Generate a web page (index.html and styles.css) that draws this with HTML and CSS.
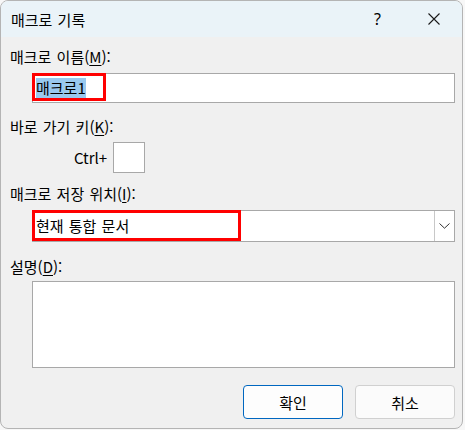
FILE: index.html
```html
<!DOCTYPE html>
<html lang="ko">
<head>
<meta charset="utf-8">
<link rel="stylesheet" href="styles.css">
</head>
<body>
<div class="window">
  <div class="titlebar">
    <span class="title">매크로 기록</span>
    <span class="help">?</span>
    <svg class="close" width="12" height="12" viewBox="0 0 12 12"><path d="M0.5 0.5 L11.5 11.5 M11.5 0.5 L0.5 11.5" stroke="#1a1a1a" stroke-width="1.1" fill="none"/></svg>
  </div>
  <div class="body">
    <div class="label">매크로 이름(<u>M</u>):</div>
    <div class="field name-field">
      <span class="selected">매크로1</span>
      <div class="mark mark-name"></div>
    </div>
    <div class="label l2">바로 가기 키(<u>K</u>):</div>
    <div class="shortcut">
      <span class="ctrl">Ctrl+</span>
      <div class="keybox"></div>
    </div>
    <div class="label l3">매크로 저장 위치(<u>I</u>):</div>
    <div class="field combo">
      <span class="combo-text">현재 통합 문서</span>
      <div class="combo-btn">
        <svg width="11" height="6" viewBox="0 0 11 6"><path d="M0.5 0.5 L5.5 5.2 L10.5 0.5" stroke="#333" stroke-width="1" fill="none"/></svg>
      </div>
      <div class="mark mark-combo"></div>
    </div>
    <div class="label l4">설명(<u>D</u>):</div>
    <div class="field desc"></div>
    <div class="buttons">
      <button class="btn primary">확인</button>
      <button class="btn">취소</button>
    </div>
  </div>
</div>
</body>
</html>
```

FILE: styles.css
```css
* { box-sizing: border-box; }
html, body { margin: 0; padding: 0; }
body {
  background: #f7f7f7;
  font-family: "Noto Sans CJK KR", "Noto Sans", sans-serif;
  font-size: 15px;
  color: #000;
  width: 465px;
  height: 430px;
  overflow: hidden;
}
.window {
  width: 463px;
  height: 429px;
  border: 1px solid #b4b4b4;
  border-radius: 8px;
  overflow: hidden;
  background: #f0f0f0;
  display: flex;
  flex-direction: column;
}
.titlebar {
  height: 36px;
  background: #eaf3f8;
  display: flex;
  align-items: center;
  padding-left: 10px;
  flex-shrink: 0;
}
.title {
  flex: 1;
  line-height: 20px;
  word-spacing: 1px;
  padding-top: 1px;
}
.help {
  font-family: "Noto Sans", sans-serif;
  font-size: 16px;
  margin-right: 47px;
}
.close { margin-right: 22px; }
.body {
  padding: 10px 7px 0 9px;
  display: flex;
  flex-direction: column;
}
.label {
  line-height: 20px;
  word-spacing: 1px;
  height: 20px;
}
.label u { text-underline-offset: 2px; }
.field {
  position: relative;
  margin-left: 22px;
  background: #fff;
  border: 1px solid #a8a8a8;
}
.name-field {
  margin-top: 6px;
  height: 30px;
  display: flex;
  align-items: center;
  padding-left: 3px;
}
.selected {
  background: #99c9ef;
  line-height: 20px;
  height: 20px;
}
.mark {
  position: absolute;
  border: 3px solid #f00;
  pointer-events: none;
}
.mark-name { left: -1px; top: -1px; width: 74px; height: 28px; }
.l2 { margin-top: 14px; }
.shortcut {
  margin-top: 5px;
  display: flex;
  align-items: center;
  padding-left: 64px;
  height: 31px;
}
.ctrl { width: 39px; line-height: 20px; }
.keybox {
  width: 32px;
  height: 31px;
  background: #fff;
  border: 1px solid #a8a8a8;
}
.l3 { margin-top: 11px; }
.combo {
  margin-top: 6px;
  height: 32px;
  display: flex;
  align-items: center;
  padding-left: 3px;
}
.combo-text { flex: 1; word-spacing: 1px; line-height: 20px; }
.combo-btn {
  width: 20px;
  height: 30px;
  border-left: 1px solid #c8c8c8;
  display: flex;
  align-items: center;
  justify-content: center;
}
.mark-combo { left: -1px; top: -1px; width: 209px; height: 31px; }
.l4 { margin-top: 15px; }
.desc { margin-top: 4px; height: 87px; }
.buttons {
  margin-top: 17px;
  display: flex;
  justify-content: flex-end;
  gap: 12px;
}
.btn {
  width: 100px;
  height: 34px;
  font-family: inherit;
  font-size: 15px;
  color: #000;
  background: #fbfbfb;
  border: 1px solid #d0d0d0;
  border-radius: 4px;
  padding: 0;
  word-spacing: 1px;
}
.btn.primary { border-color: #0067c0; background: #fdfdfd; }
```
